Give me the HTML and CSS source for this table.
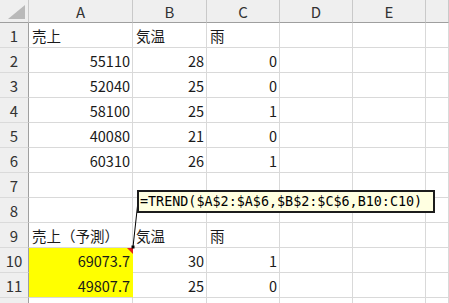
FILE: index.html
```html
<!DOCTYPE html>
<html lang="ja">
<head>
<meta charset="utf-8">
<title>Sheet1</title>
<link rel="stylesheet" href="styles.css">
</head>
<body>
<div class="sheet">
  <div class="row head">
    <div class="corner"><span class="select-all"></span></div>
    <div class="col">A</div><div class="col">B</div><div class="col">C</div><div class="col">D</div><div class="col">E</div><div class="col"></div>
  </div>
  <div class="row"><div class="num">1</div><div class="c">売上</div><div class="c">気温</div><div class="c">雨</div><div class="c"></div><div class="c"></div><div class="c"></div></div>
  <div class="row"><div class="num">2</div><div class="c r">55110</div><div class="c r">28</div><div class="c r">0</div><div class="c"></div><div class="c"></div><div class="c"></div></div>
  <div class="row"><div class="num">3</div><div class="c r">52040</div><div class="c r">25</div><div class="c r">0</div><div class="c"></div><div class="c"></div><div class="c"></div></div>
  <div class="row"><div class="num">4</div><div class="c r">58100</div><div class="c r">25</div><div class="c r">1</div><div class="c"></div><div class="c"></div><div class="c"></div></div>
  <div class="row"><div class="num">5</div><div class="c r">40080</div><div class="c r">21</div><div class="c r">0</div><div class="c"></div><div class="c"></div><div class="c"></div></div>
  <div class="row"><div class="num">6</div><div class="c r">60310</div><div class="c r">26</div><div class="c r">1</div><div class="c"></div><div class="c"></div><div class="c"></div></div>
  <div class="row"><div class="num">7</div><div class="c"></div><div class="c"></div><div class="c"></div><div class="c"></div><div class="c"></div><div class="c"></div></div>
  <div class="row"><div class="num">8</div><div class="c"></div><div class="c"></div><div class="c"></div><div class="c"></div><div class="c"></div><div class="c"></div></div>
  <div class="row"><div class="num">9</div><div class="c clip">売上（予測）</div><div class="c">気温</div><div class="c">雨</div><div class="c"></div><div class="c"></div><div class="c"></div></div>
  <div class="row"><div class="num">10</div><div class="c r fill">69073.7<span class="note-mark"></span></div><div class="c r">30</div><div class="c r">1</div><div class="c"></div><div class="c"></div><div class="c"></div></div>
  <div class="row"><div class="num">11</div><div class="c r fill fill-last">49807.7</div><div class="c r">25</div><div class="c r">0</div><div class="c"></div><div class="c"></div><div class="c"></div></div>
  <div class="row"><div class="num"></div><div class="c"></div><div class="c"></div><div class="c"></div><div class="c"></div><div class="c"></div><div class="c"></div></div>

  <svg class="leader" width="449" height="303" viewBox="0 0 449 303">
    <line x1="133" y1="247" x2="137.5" y2="206" stroke="#000" stroke-width="1"/>
    <rect x="131.5" y="245.5" width="3" height="3" fill="#000"/>
  </svg>
  <div class="note">=TREND($A$2:$A$6,$B$2:$C$6,B10:C10)</div>
</div>
</body>
</html>
```
FILE: styles.css
```css
* { box-sizing: border-box; }

html, body {
  margin: 0;
  padding: 0;
  background: #fff;
  overflow: hidden;
}

.sheet {
  position: relative;
  width: 449px;
  height: 303px;
  overflow: hidden;
  font-family: "Noto Sans CJK JP", "Noto Sans", sans-serif;
  font-size: 14.5px;
  color: #1a1a1a;
}

.row {
  display: grid;
  grid-template-columns: 29px 104px 74px 73px 73px 73px 1fr;
  height: 25px;
}

.row.head {
  height: 23px;
}

/* column header strip */
.head > div {
  background: #efefef;
  border-right: 1px solid #c9c9c9;
  border-bottom: 1px solid #9f9f9f;
}

.corner {
  position: relative;
}

.select-all {
  position: absolute;
  right: 3px;
  bottom: 3px;
  width: 0;
  height: 0;
  border-left: 17px solid transparent;
  border-bottom: 14px solid #b9b9b9;
}

.col {
  display: flex;
  align-items: center;
  justify-content: center;
  font-size: 15px;
  color: #333;
  line-height: 1;
  padding-top: 1px;
}

/* row numbers */
.num {
  background: #efefef;
  border-right: 1px solid #9f9f9f;
  border-bottom: 1px solid #dadada;
  display: flex;
  align-items: center;
  justify-content: center;
  font-size: 15px;
  color: #333;
  line-height: 1;
  padding-top: 1px;
}

/* ordinary cells */
.c {
  position: relative;
  border-right: 1px solid #d9d9d9;
  border-bottom: 1px solid #d9d9d9;
  display: flex;
  align-items: flex-end;
  padding: 0 2px 1px 3px;
  line-height: 20px;
  white-space: nowrap;
}

.c.r {
  justify-content: flex-end;
}

.c.clip {
  overflow: visible;
}

.c.fill {
  background: #ffff00;
  border-right-color: #ffff00;
  border-bottom-color: #ffff00;
}

.c.fill-last {
  border-bottom-color: #d9d9d9;
}

/* comment indicator in the corner of the cell */
.note-mark {
  position: absolute;
  top: 0;
  right: -1px;
  width: 0;
  height: 0;
  border-left: 6px solid transparent;
  border-top: 6px solid #e0201b;
}

.leader {
  position: absolute;
  left: 0;
  top: 0;
  pointer-events: none;
}

.note {
  position: absolute;
  left: 137px;
  top: 190px;
  width: 298px;
  height: 23px;
  background: #ffffe1;
  border: 2px solid #1c1c1c;
  font-family: "DejaVu Sans Mono", "Liberation Mono", monospace;
  font-size: 13.4px;
  line-height: 19px;
  padding-left: 1px;
  color: #000;
  white-space: nowrap;
}
```
